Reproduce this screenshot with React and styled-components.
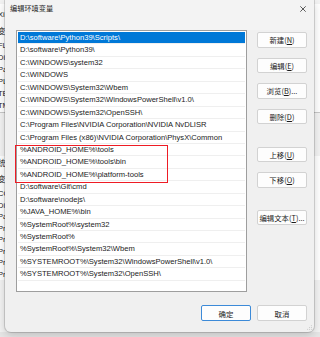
import React from 'react'
import styled, { createGlobalStyle } from 'styled-components'

const GlobalStyle = createGlobalStyle`
    html, body {
        margin: 0;
        padding: 0;
        background: #e4e4e4;
    }
    * {
        box-sizing: border-box;
    }
`

const Desktop = styled.div`
    position: relative;
    width: 320px;
    height: 337px;
    overflow: hidden;
    font-family: "Liberation Sans", "Noto Sans CJK SC", sans-serif;
    background: #e6e6e6;
`

const BackWindow = styled.div`
    position: absolute;
    left: -120px;
    top: 0;
    width: 460px;
    height: 332px;
    background: #f3f3f3;
    display: flex;
    flex-direction: column;
    padding: 4px 0 0 0;
`

const BackList = styled.div`
    background: #fff;
    margin-left: 118px;
    display: flex;
    flex-direction: column;
    padding: ${p => p.$pad};
`

const BackLine = styled.div`
    font-size: 7.5px;
    height: ${p => p.$h || 11}px;
    line-height: ${p => p.$h || 11}px;
    color: #222;
    white-space: nowrap;
`

const BackGap = styled.div`
    height: ${p => p.$h}px;
    border-top: 1px solid #c8c8c8;
`

const Dialog = styled.div`
    position: absolute;
    left: 5px;
    top: 0;
    width: 309px;
    height: 332px;
    background: #f0f0f0;
    border-radius: 0 0 6px 6px;
    box-shadow: 0 0 0 1px rgba(0, 0, 0, 0.14), 0 3px 10px rgba(0, 0, 0, 0.18);
    display: flex;
    flex-direction: column;
`

const TitleBar = styled.div`
    height: 30px;
    display: flex;
    justify-content: space-between;
    align-items: flex-start;
    padding: 4px 5px 0 5px;
    background: #f3f3f3;
`

const Title = styled.span`
    font-family: "Noto Sans CJK SC", sans-serif;
    font-size: 7.2px;
    line-height: 9px;
    color: #1a1a1a;
`

const Close = styled.svg`
    width: 6px;
    height: 6px;
    margin-top: 2px;
    margin-right: 3px;
`

const Body = styled.div`
    display: flex;
    gap: 10px;
    padding: 0 0 0 11px;
`

const ListBox = styled.div`
    width: 231px;
    height: 262px;
    background: #fff;
    border: 1px solid #9e9e9e;
    padding: 1px;
    display: flex;
    flex-direction: column;
    position: relative;
`

const Row = styled.div`
    height: 12.45px;
    line-height: 12px;
    font-size: 7.6px;
    padding-left: 2px;
    white-space: nowrap;
    overflow: hidden;
    border-bottom: 1px solid #efefef;
    color: ${p => (p.$selected ? '#fff' : '#1a1a1a')};
    background: ${p => (p.$selected ? '#0078d7' : 'transparent')};
`

const Highlight = styled.div`
    position: absolute;
    left: -2px;
    top: 114px;
    width: 153px;
    height: 38px;
    border: 1.5px solid #ee1c25;
    pointer-events: none;
`

const ButtonColumn = styled.div`
    display: flex;
    flex-direction: column;
    width: 50px;
    padding-top: 2px;
`

const Spacer = styled.div`
    height: ${p => p.$h}px;
`

const Button = styled.div`
    height: ${p => p.$h || 15.5}px;
    width: 50px;
    margin-bottom: ${p => p.$mb || 0}px;
    background: #fdfdfd;
    border: 1px solid ${p => (p.$primary ? '#3c8ad8' : '#d2d2d2')};
    border-radius: 2px;
    display: flex;
    align-items: center;
    justify-content: center;
    font-family: "Noto Sans CJK SC", sans-serif;
    font-size: 7.4px;
    color: #1b1b1b;
    white-space: nowrap;
`

const Footer = styled.div`
    display: flex;
    justify-content: flex-end;
    gap: 6px;
    padding: 13px 7px 0 0;
`

const Grip = styled.svg`
    position: absolute;
    right: 2px;
    bottom: 2px;
    width: 5px;
    height: 5px;
`

const paths = [
    'D:\\software\\Python39\\Scripts\\',
    'D:\\software\\Python39\\',
    'C:\\WINDOWS\\system32',
    'C:\\WINDOWS',
    'C:\\WINDOWS\\System32\\Wbem',
    'C:\\WINDOWS\\System32\\WindowsPowerShell\\v1.0\\',
    'C:\\WINDOWS\\System32\\OpenSSH\\',
    'C:\\Program Files\\NVIDIA Corporation\\NVIDIA NvDLISR',
    'C:\\Program Files (x86)\\NVIDIA Corporation\\PhysX\\Common',
    '%ANDROID_HOME%\\tools',
    '%ANDROID_HOME%\\tools\\bin',
    '%ANDROID_HOME%\\platform-tools',
    'D:\\software\\Git\\cmd',
    'D:\\software\\nodejs\\',
    '%JAVA_HOME%\\bin',
    '%SystemRoot%\\system32',
    '%SystemRoot%',
    '%SystemRoot%\\System32\\Wbem',
    '%SYSTEMROOT%\\System32\\WindowsPowerShell\\v1.0\\',
    '%SYSTEMROOT%\\System32\\OpenSSH\\',
]

const userVars = ['Xi', '变', 'FL', 'Di', 'Pa', 'PL', 'TE', 'TM']
const sysVars = ['统', '变', 'CO', 'Di', 'Pa', 'Pr', 'Pr', 'Pr', 'Pr', 'Pr']

const App = () => {
    return (
        <Desktop>
            <GlobalStyle />
            <BackWindow>
                <BackList $pad="2px 0 0 0">
                    {userVars.map((v, i) => (
                        <BackLine key={i} $h={i < 2 ? 17 : 12}>{v}</BackLine>
                    ))}
                </BackList>
                <BackGap $h={44} />
                <BackList $pad="0">
                    {sysVars.map((v, i) => (
                        <BackLine key={i} $h={i < 2 ? 16 : 11.5}>{v}</BackLine>
                    ))}
                </BackList>
            </BackWindow>
            <Dialog>
                <TitleBar>
                    <Title>编辑环境变量</Title>
                    <Close viewBox="0 0 6 6">
                        <path d="M0.3 0.3 L5.7 5.7 M5.7 0.3 L0.3 5.7" stroke="#333" strokeWidth="0.8" fill="none" />
                    </Close>
                </TitleBar>
                <Body>
                    <ListBox>
                        {paths.map((p, i) => (
                            <Row key={i} $selected={i === 0}>{p}</Row>
                        ))}
                        <Highlight />
                    </ListBox>
                    <ButtonColumn>
                        <Button $mb={10}>新建(<u>N</u>)</Button>
                        <Button $mb={10}>编辑(<u>E</u>)</Button>
                        <Button $mb={10}>浏览(<u>B</u>)...</Button>
                        <Button>删除(<u>D</u>)</Button>
                        <Spacer $h={22.5} />
                        <Button $mb={10}>上移(<u>U</u>)</Button>
                        <Button>下移(<u>O</u>)</Button>
                        <Spacer $h={22} />
                        <Button>编辑文本(<u>T</u>)...</Button>
                    </ButtonColumn>
                </Body>
                <Footer>
                    <Button $h={16} $primary>确定</Button>
                    <Button $h={16}>取消</Button>
                </Footer>
                <Grip viewBox="0 0 5 5">
                    <circle cx="4.3" cy="0.7" r="0.45" fill="#aaa" />
                    <circle cx="2.5" cy="2.5" r="0.45" fill="#aaa" />
                    <circle cx="4.3" cy="2.5" r="0.45" fill="#aaa" />
                    <circle cx="0.7" cy="4.3" r="0.45" fill="#aaa" />
                    <circle cx="2.5" cy="4.3" r="0.45" fill="#aaa" />
                    <circle cx="4.3" cy="4.3" r="0.45" fill="#aaa" />
                </Grip>
            </Dialog>
        </Desktop>
    )
}

export default App
